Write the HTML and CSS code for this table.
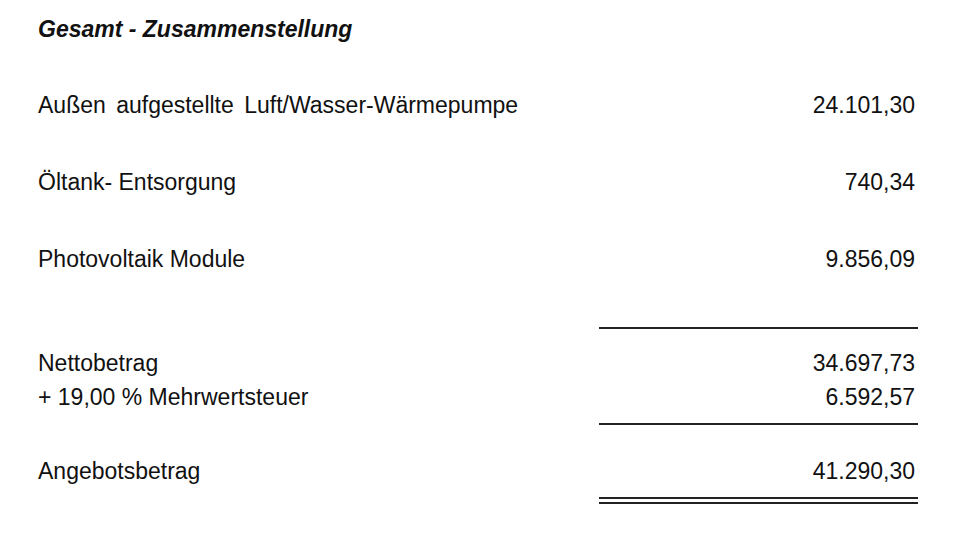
FILE: index.html
```html
<!DOCTYPE html>
<html lang="de">
<head>
<meta charset="utf-8">
<title>Gesamt - Zusammenstellung</title>
<link rel="stylesheet" href="styles.css">
</head>
<body>
<main class="sheet">
  <h1 class="title">Gesamt - Zusammenstellung</h1>
  <section class="items">
    <div class="row"><span class="label wide">Außen aufgestellte Luft/Wasser-Wärmepumpe</span><span class="amt">24.101,30</span></div>
    <div class="row"><span class="label">Öltank- Entsorgung</span><span class="amt">740,34</span></div>
    <div class="row"><span class="label">Photovoltaik Module</span><span class="amt">9.856,09</span></div>
  </section>
  <div class="rule rule-sum"></div>
  <section class="totals">
    <div class="row"><span class="label">Nettobetrag</span><span class="amt">34.697,73</span></div>
    <div class="row"><span class="label">+ 19,00 % Mehrwertsteuer</span><span class="amt">6.592,57</span></div>
  </section>
  <div class="rule rule-tax"></div>
  <div class="row grand"><span class="label">Angebotsbetrag</span><span class="amt">41.290,30</span></div>
  <div class="rule-double"></div>
</main>
</body>
</html>
```

FILE: styles.css
```css
html, body {
  margin: 0;
  padding: 0;
  background: #ffffff;
}

body {
  font-family: "Liberation Sans", Arial, sans-serif;
  color: #111111;
  font-size: 23px;
  line-height: 26px;
}

.sheet {
  width: 880px;
  padding: 16px 0 0 38px;
  display: flex;
  flex-direction: column;
}

.title {
  margin: 0;
  font-size: 23px;
  line-height: 26px;
  font-weight: bold;
  font-style: italic;
}

.items {
  margin-top: 50px;
  display: flex;
  flex-direction: column;
  gap: 51px;
}

.row {
  display: flex;
  justify-content: space-between;
  align-items: baseline;
  height: 26px;
}

.label.wide {
  word-spacing: 4px;
}

.amt {
  padding-right: 3px;
}

.rule {
  align-self: flex-end;
  width: 319px;
  height: 2px;
  background: #222222;
}

.rule-sum {
  margin-top: 55px;
}

.totals {
  margin-top: 21px;
  display: flex;
  flex-direction: column;
  gap: 8px;
}

.rule-tax {
  margin-top: 13px;
}

.grand {
  margin-top: 33px;
}

.rule-double {
  align-self: flex-end;
  width: 319px;
  height: 3px;
  margin-top: 13px;
  border-top: 2px solid #222222;
  border-bottom: 2px solid #222222;
}
```
